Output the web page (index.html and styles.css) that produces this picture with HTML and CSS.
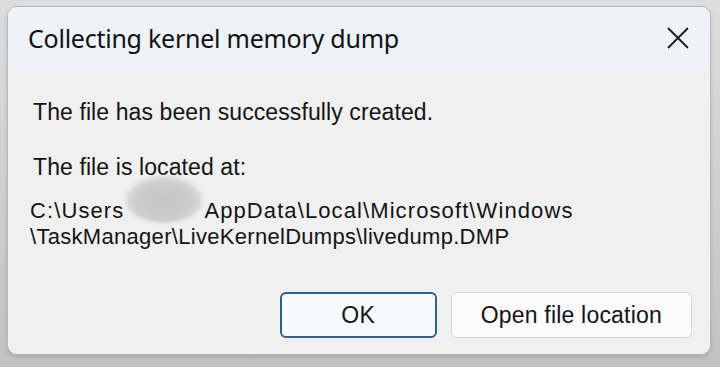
FILE: index.html
```html
<!DOCTYPE html>
<html lang="en">
<head>
    <meta charset="UTF-8">
    <title>Collecting kernel memory dump</title>
    <link rel="stylesheet" href="styles.css">
</head>
<body>
    <div class="dialog">
        <div class="titlebar">
            <span class="title">Collecting kernel memory dump</span>
            <button class="close" aria-label="Close">
                <svg width="24" height="24" viewBox="0 0 24 24">
                    <path d="M2 2 L22 22 M22 2 L2 22" stroke="#1b1b1b" stroke-width="1.8" fill="none"/>
                </svg>
            </button>
        </div>
        <div class="content">
            <p class="message">The file has been successfully created.</p>
            <p class="message">The file is located at:</p>
            <p class="path"><span class="wide">C:\Users<span class="redacted">\user\</span>AppData\Local\Microsoft\Windows</span><br>\TaskManager\LiveKernelDumps\livedump.DMP</p>
        </div>
        <div class="actions">
            <button class="btn primary">OK</button>
            <button class="btn">Open file location</button>
        </div>
    </div>
</body>
</html>
```
FILE: styles.css
```css
body {
    margin: 0;
    padding: 6px 8px 0 7px;
    height: 367px;
    box-sizing: border-box;
    background: linear-gradient(180deg, #dedede, #c2c2c2);
    font-family: "Liberation Sans", Arial, sans-serif;
    color: #141414;
}

.dialog {
    width: 704px;
    height: 349px;
    box-sizing: border-box;
    background: #f0f0f0;
    border: 1px solid #b9b9b9;
    border-radius: 10px;
    overflow: hidden;
    display: flex;
    flex-direction: column;
    box-shadow: 0 2px 4px rgba(0, 0, 0, 0.15);
}

.titlebar {
    height: 62px;
    background: #eef3f9;
    display: flex;
    align-items: center;
    justify-content: space-between;
    padding: 0 19px 0 20px;
    flex-shrink: 0;
}

.title {
    font-family: "Noto Sans", sans-serif;
    font-size: 25px;
    letter-spacing: -0.25px;
    color: #111;
}

.close {
    background: none;
    border: none;
    padding: 0;
    width: 26px;
    height: 26px;
    display: flex;
    align-items: center;
    justify-content: center;
}

.content {
    padding: 0 0 0 25px;
    flex: 1;
}

.message {
    margin: 0;
    font-size: 23px;
    line-height: 26px;
    letter-spacing: 0.1px;
}

.message:first-child {
    margin-top: 30px;
}

.message + .message {
    margin-top: 29px;
}

.path {
    margin: 18px 0 0 -3px;
    font-size: 22px;
    line-height: 26px;
    letter-spacing: 0.3px;
}

.path .wide {
    letter-spacing: 1.1px;
}

.redacted {
    position: relative;
    color: transparent;
    display: inline-block;
    width: 80px;
}

.redacted::after {
    content: "";
    position: absolute;
    left: 0;
    top: -23px;
    width: 80px;
    height: 48px;
    border-radius: 50%;
    background: radial-gradient(ellipse at 50% 55%, #c6c6c6 0%, #cbcbcb 45%, #d6d6d6 62%, rgba(240, 240, 240, 0) 72%);
    filter: blur(1.5px);
}

.actions {
    display: flex;
    justify-content: flex-end;
    gap: 14px;
    padding: 0 18px 16px 0;
}

.btn {
    height: 46px;
    border: 1px solid #d4d4d4;
    border-radius: 6px;
    background: #fbfbfb;
    font-family: "Liberation Sans", Arial, sans-serif;
    font-size: 23px;
    letter-spacing: 0.2px;
    color: #141414;
    padding: 0 29px;
}

.btn.primary {
    width: 157px;
    border: 2px solid #2f5f8c;
    background: #f5fbff;
}
```
